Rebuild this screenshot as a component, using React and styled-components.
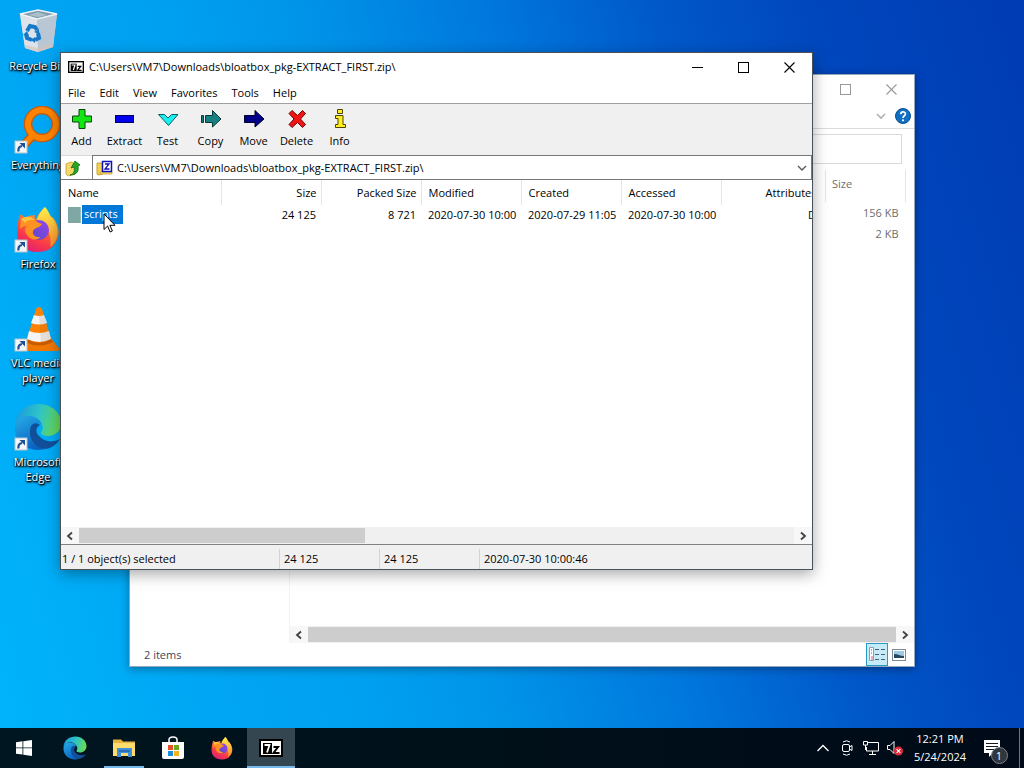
import React from 'react';
import styled, { createGlobalStyle, css } from 'styled-components';

const GlobalStyle = createGlobalStyle`
  *, *::before, *::after { box-sizing: border-box; }
  body { margin: 0; }
  button, input { font: inherit; color: inherit; border: 0; padding: 0; margin: 0; background: none; }
  svg { display: block; flex: none; }
`;

const font = css`
  font-family: 'Open Sans', 'Noto Sans', sans-serif;
  font-size: 11px;
  line-height: 16px;
`;

const Screen = styled.div`
  ${font}
  display: flex;
  flex-direction: column;
  height: 100vh;
  overflow: hidden;
  color: #000;
`;

const Desktop = styled.main`
  position: relative;
  flex: 1;
  min-height: 0;
  background: linear-gradient(74deg, #00b4fb 0%, #00a4f2 20%, #00a0f0 30%, #0094e9 41%, #0076dc 57%, #0058c9 70%, #0046bc 83%, #003cb4 100%);
`;

/* ---------- desktop shortcuts ---------- */

const ShortcutList = styled.nav`
  display: flex;
  flex-direction: column;
  width: 76px;
`;

const Shortcut = styled.a`
  display: flex;
  flex-direction: column;
  align-items: center;
  gap: 3px;
  height: 99px;
  padding-top: 7px;
  color: #fff;
  text-align: center;
  text-decoration: none;
  line-height: 15px;
  text-shadow: 0 1px 2px #000, 1px 1px 1px #000, 1px 1px 3px #000;
`;

/* ---------- windows ---------- */

const Window = styled.section`
  position: absolute;
  display: flex;
  flex-direction: column;
  background: #fff;
`;

const ArchiveWindow = styled(Window)`
  top: 52px;
  left: 60px;
  right: 211px;
  bottom: 158px;
  border: 1px solid #4a5258;
  box-shadow: 0 4px 14px rgba(0, 0, 0, 0.35);
`;

const ExplorerWindow = styled(Window)`
  top: 74px;
  left: 129px;
  right: 109px;
  bottom: 61px;
  border: 1px solid rgba(20, 60, 110, 0.45);
  box-shadow: 0 2px 8px rgba(0, 0, 0, 0.35);
  color: #6d6d6d;
`;

const TitleBar = styled.header`
  display: flex;
  align-items: center;
  height: 30px;
  padding: 0 0 2px 7px;
  gap: 5px;
  flex: none;
`;

const Title = styled.h1`
  flex: 1;
  margin: 0;
  font-size: 11px;
  font-weight: 400;
`;

const CaptionButton = styled.button`
  display: flex;
  align-items: center;
  justify-content: center;
  width: 46px;
  height: 28px;
  margin-left: ${(p) => (p.$first ? 'auto' : '-5px')};
`;

const MenuBar = styled.nav`
  display: flex;
  height: 21px;
  border-bottom: 1px solid #a0a0a0;
  flex: none;
`;

const MenuItem = styled.button`
  padding: 0 7px 1px;
`;

const Toolbar = styled.div`
  display: flex;
  gap: 2px;
  height: 51px;
  padding-top: 5px;
  background: #f0f0f0;
  flex: none;
`;

const ToolButton = styled.button`
  display: flex;
  flex-direction: column;
  align-items: center;
  gap: 4px;
  width: 41px;
`;

const AddressBar = styled.div`
  display: flex;
  height: 25px;
  flex: none;
`;

const UpButton = styled.button`
  width: 31px;
  padding-left: 4px;
  border-top: 1px solid #d8d8d8;
  border-bottom: 1px solid #777;
`;

const PathBox = styled.div`
  display: flex;
  flex: 1;
  align-items: center;
  gap: 4px;
  padding: 0 4px 0 3px;
  border: 1px solid #777;
`;

const PathInput = styled.input`
  flex: 1;
  min-width: 0;
`;

const ListArea = styled.div`
  flex: 1;
  min-height: 0;
  overflow: hidden;
`;

const FileTable = styled.table`
  width: 760px;
  table-layout: fixed;
  border-collapse: collapse;
`;

const HeadCell = styled.th`
  height: 25px;
  padding: 0 4px 0 7px;
  border-right: 1px solid #e5e5e5;
  font-weight: 400;
  text-align: ${(p) => p.$align || 'left'};
  white-space: nowrap;
`;

const Cell = styled.td`
  height: 19px;
  padding: 0 5px 0 7px;
  text-align: ${(p) => p.$align || 'left'};
  white-space: nowrap;
`;

const FileName = styled.div`
  display: flex;
  align-items: center;
  gap: 1px;
`;

const Folder = styled.span`
  width: 13px;
  height: 16px;
  background: #7fa8a5;
  border-right: 1px solid #99bdb8;
`;

const SelectedName = styled.span`
  padding: 1px 5px 2px 2px;
  background: #0078d7;
  color: #fff;
`;

const ScrollBar = styled.div`
  display: flex;
  align-items: center;
  height: 17px;
  background: #f0f0f0;
  flex: none;
`;

const ScrollButton = styled.button`
  display: flex;
  align-items: center;
  justify-content: center;
  width: 18px;
  height: 17px;
  background: #f7f7f7;
`;

const ScrollTrack = styled.div`
  flex: 1;
  height: 15px;
`;

const ScrollThumb = styled.div`
  width: ${(p) => p.$size};
  height: 100%;
  background: #cdcdcd;
`;

const StatusBar = styled.footer`
  display: flex;
  align-items: center;
  height: 25px;
  padding-top: 3px;
  border-top: 1px solid #808080;
  background: #f0f0f0;
  flex: none;
`;

const StatusCell = styled.span`
  width: ${(p) => p.$width};
  padding: 2px 0 2px ${(p) => (p.$first ? '1px' : '4px')};
  border-right: ${(p) => (p.$last ? '0' : '1px solid #d4d4d4')};
`;

/* ---------- explorer parts ---------- */

const RibbonBar = styled.div`
  display: flex;
  align-items: center;
  justify-content: flex-end;
  gap: 9px;
  height: 24px;
  padding: 0 3px 2px 0;
  border-bottom: 1px solid #dcdcdc;
  flex: none;
`;

const SearchRow = styled.div`
  display: flex;
  justify-content: flex-end;
  padding: 5px 12px 6px;
  flex: none;
`;

const SearchInput = styled.input`
  width: 190px;
  height: 30px;
  border: 1px solid #d9d9d9;
`;

const ExplorerBody = styled.div`
  display: flex;
  flex: 1;
  min-height: 0;
`;

const NavPane = styled.aside`
  width: 160px;
  border-right: 1px solid #f3f3f3;
`;

const ExplorerMain = styled.div`
  display: flex;
  flex: 1;
  flex-direction: column;
`;

const ExplorerList = styled.div`
  flex: 1;
  padding-right: 8px;
`;

const ExplorerTable = styled.table`
  width: 100%;
  table-layout: fixed;
  border-collapse: collapse;
`;

const SizeHead = styled.th`
  width: 80px;
  height: 32px;
  padding: 0 6px 4px;
  border-left: 1px solid #e5e5e5;
  border-right: 1px solid #e5e5e5;
  font-weight: 400;
  text-align: left;
`;

const SizeCell = styled.td`
  height: 21px;
  padding: 0 7px 0 0;
  text-align: right;
`;

const ExplorerStatus = styled.footer`
  display: flex;
  align-items: center;
  height: 23px;
  padding: 0 4px 0 14px;
  color: #3b4658;
  flex: none;
`;

const ItemCount = styled.span`
  flex: 1;
`;

const ViewButton = styled.button`
  display: flex;
  align-items: center;
  justify-content: center;
  width: 22px;
  height: 23px;
  border: 1px solid ${(p) => (p.$active ? '#2a9ac4' : 'transparent')};
  background: ${(p) => (p.$active ? '#c4ebf7' : 'transparent')};
`;

/* ---------- taskbar ---------- */

const Taskbar = styled.footer`
  display: flex;
  height: 40px;
  background: linear-gradient(90deg, #001620 0%, #001019 50%, #000a18 100%);
  color: #fff;
  flex: none;
`;

const TaskButtons = styled.div`
  display: flex;
  flex: 1;
  gap: 1px;
`;

const TaskButton = styled.button`
  position: relative;
  display: flex;
  align-items: center;
  justify-content: center;
  width: ${(p) => (p.$start ? '50px' : '48px')};
  padding-right: ${(p) => (p.$start ? '2px' : '0')};
  background: ${(p) => (p.$active ? '#34464f' : 'transparent')};

  &::after {
    content: '';
    position: absolute;
    bottom: 0;
    left: ${(p) => (p.$active ? '0' : '4px')};
    right: ${(p) => (p.$active ? '0' : '4px')};
    height: 2px;
    background: ${(p) => (p.$active || p.$open ? '#76b9ed' : 'transparent')};
  }
`;

const Tray = styled.div`
  display: flex;
  align-items: center;
`;

const TrayButton = styled.button`
  display: flex;
  align-items: center;
  justify-content: center;
  width: 24px;
  height: 40px;
`;

const Clock = styled.button`
  display: flex;
  flex-direction: column;
  align-items: center;
  width: 66px;
  line-height: 18px;
`;

const NoticeButton = styled(TrayButton)`
  width: 46px;
  padding-right: 8px;
`;

const ShowDesktop = styled.button`
  width: 5px;
  height: 40px;
  border-left: 1px solid #6b757c;
`;

const Pointer = styled.svg`
  position: absolute;
  left: 103px;
  top: 213px;
`;

/* ---------- drawings ---------- */

const LinkBadge = () => (
  <g>
    <rect x="1" y="35" width="12" height="12" fill="#f4f6f8" stroke="#b9c3cc" strokeWidth="1" />
    <path d="M4.500 45.500C4 42 5 40.500 8 40" fill="none" stroke="#1c5096" strokeWidth="2.200" />
    <path d="M5.500 37H11v5.500z" fill="#1c5096" />
  </g>
);

const RecycleBin = () => (
  <svg width="48" height="48" viewBox="0 0 48 48">
    <path d="M6 7 24 3l19 4-4 33-15 5-13-4z" fill="#ccd6df" />
    <path d="M6 7l17 5 1 33-13-4z" fill="#dde3e9" />
    <path d="M23 12 43 7l-4 33-15 5z" fill="#b9c6d3" />
    <path d="M6 7 24 3l19 4-20 5z" fill="#7d9aad" stroke="#edf3f6" strokeWidth="1.500" />
    <path d="M14 8l10-3 9 3-9 2z" fill="#a9bfc9" />
    <g fill="none" stroke="#1678c8" strokeWidth="4">
      <path d="M13 24l3-5 5 1 2 3" />
      <path d="M24 26l1 5-4 2" />
      <path d="M18 33l-5-2-1-4" />
    </g>
    <path d="M20 25l5-3 0 5zM21 30v6l-4-3zM9 28l4-4 2 5z" fill="#1678c8" />
    <path d="M11 41l13 4 15-5 0-3-15 4-13-3z" fill="#d9c3b8" opacity=".6" />
  </svg>
);

const EverythingIcon = () => (
  <svg width="48" height="48" viewBox="0 0 48 48">
    <path d="M20 28 8 41" stroke="#c85a0a" strokeWidth="9" />
    <circle cx="28" cy="18" r="14" fill="none" stroke="#c85a0a" strokeWidth="8.500" />
    <path d="M20 28 8 41" stroke="#ff8300" strokeWidth="6" />
    <circle cx="28" cy="18" r="14" fill="none" stroke="#ff8300" strokeWidth="6" />
    <LinkBadge />
  </svg>
);

const FirefoxArt = () => (
  <g>
    <path d="M6 10c2-1 3 1 5 3 4-3 7-2 10-3-1 2 0 4 1 5 2-7 7-10 8-13 4 3 4 7 7 10 2 0 3 2 3 2 5 7 6 15 3 21-4 9-11 12-20 12C11 47 3 39 3 28c0-7 1-12 3-18z" fill="url(#ffBody)" />
    <path d="M23 15c2-7 6-10 8-13 4 4 4 8 8 12 7 9 6 23-3 28 2-8-1-18-6-23z" fill="url(#ffTail)" />
    <circle cx="25" cy="25" r="10" fill="url(#ffGlobe)" />
    <path d="M7 14c5-3 11-2 15 2 2 2 5 2 6 3-2 4-7 3-9 7-1 4 3 7 8 6-4 4-11 3-14-2-3-4-2-7 0-9-3 0-5 1-7 3z" fill="#ff9322" />
    <path d="M7 14c3-3 10-3 14 1-5-1-9 1-10 3z" fill="#ffc343" />
  </g>
);

const Firefox = ({ size, linked }) => (
  <svg width={size} height={size} viewBox="0 0 48 48">
    <defs>
      <linearGradient id="ffBody" x1=".8" y1="0" x2=".3" y2="1">
        <stop offset="0" stopColor="#ffd43a" />
        <stop offset=".4" stopColor="#ff7a2c" />
        <stop offset=".75" stopColor="#f8364c" />
        <stop offset="1" stopColor="#dc2275" />
      </linearGradient>
      <linearGradient id="ffTail" x1="0" y1="0" x2="0" y2="1">
        <stop offset="0" stopColor="#fff04a" />
        <stop offset="1" stopColor="#ff8a2a" />
      </linearGradient>
      <linearGradient id="ffGlobe" x1="1" y1="0" x2="0" y2="1">
        <stop offset="0" stopColor="#9a46ee" />
        <stop offset="1" stopColor="#5348c8" />
      </linearGradient>
    </defs>
    <FirefoxArt />
    {linked && <LinkBadge />}
  </svg>
);

const VlcIcon = () => (
  <svg width="48" height="48" viewBox="0 0 48 48">
    <path d="M14 33h22l9 11q1 3-2 3H5q-2 0-1-3z" fill="#f07800" />
    <path d="M14 33h22l3 5q-14 7-28 0z" fill="#c65b00" />
    <path d="M22 5q3-4 6 0l9 30q-12 7-24 0z" fill="#ff8205" />
    <path d="M20 11q5 2 10 0l3 8q-8 3-16 0zM15 27q10 4 20 0l2 8q-12 6-24 0z" fill="#f4f4f4" />
    <path d="M25 12l5-1 7 24q-5 3-10 3z" fill="#8a5a30" opacity=".14" />
    <LinkBadge />
  </svg>
);

const Edge = ({ size, linked }) => (
  <svg width={size} height={size} viewBox="0 0 48 48">
    <defs>
      <linearGradient id="edgeTop" x1="0" y1=".4" x2="1" y2=".6">
        <stop offset="0" stopColor="#1a9ce0" />
        <stop offset=".5" stopColor="#2fc5c4" />
        <stop offset="1" stopColor="#6bdc4e" />
      </linearGradient>
      <linearGradient id="edgeLeft" x1="0" y1="0" x2=".5" y2="1">
        <stop offset="0" stopColor="#27aee9" />
        <stop offset="1" stopColor="#0a62c0" />
      </linearGradient>
    </defs>
    <path d="M1 22C2 8 12 1 25 1c13 0 22 9 22 19 0 8-6 13-13 13-5 0-8-2-7-4 3-3 2-9-3-13C17 10 6 12 1 22z" fill="url(#edgeTop)" />
    <path d="M1 24c1-8 8-12 14-11 6 0 11 4 12 8-6-3-10 2-10 8 0 8 6 15 14 17C15 50 0 40 1 24z" fill="url(#edgeLeft)" />
    <path d="M17 23c-4 11 4 23 15 23 6-1 11-5 14-10-7 4-16 3-21-3-4-4-3-9 1-11-3-3-7-2-9 1z" fill="#124f9b" />
    {linked && <LinkBadge />}
  </svg>
);

const SevenZipIcon = ({ width, height }) => (
  <svg width={width} height={height} viewBox="0 0 24 18">
    <rect x="1" y="1" width="22" height="16" fill="#fff" stroke="#000" strokeWidth="2" />
    <rect x="4" y="4" width="9" height="11" fill="#000" />
    <path d="M5.500 6h5L8 13.500" fill="none" stroke="#fff" strokeWidth="1.800" />
    <path d="M14.500 8h4.500l-4.500 6h6" fill="none" stroke="#000" strokeWidth="2" />
  </svg>
);

const toolIcons = {
  Add: <path d="M7 .5h6v6.500h6.500v6H13v6.500H7V13H.5V7H7z" fill="#12e512" stroke="#064806" />,
  Extract: <rect x=".5" y="6.500" width="18" height="7" fill="#0000f2" stroke="#000060" />,
  Test: <path d="M.5 5.500h6L10 9l3.500-3.500h6.500L10.500 16.500z" fill="#18f0f0" stroke="#0a5c66" />,
  Copy: <path d="M.5 6.500h2v7h-2zM4.500 6.500h7v-5L20 10l-8.500 8v-4.500h-7z" fill="#178080" stroke="#073838" />,
  Move: <path d="M.5 6.500H11v-5L20 10l-9 8v-4.500H.5z" fill="#000088" stroke="#00002e" />,
  Delete: <path d="M2 4.500 5 1.500l5.500 5 5-5 3 3-5 5.500 5 5.500-3 3-5-5-5.500 5-3-3 5-5.500z" fill="#f01414" stroke="#6a0808" />,
  Info: <path d="M7.500.5h5v4h-5zM5.500 6.500h7.500v9h2.500v3h-10v-3H8v-6H5.500z" fill="#ffef20" stroke="#4a4400" />,
};

const UpFolder = () => (
  <svg width="17" height="18" viewBox="0 0 17 18">
    <path d="M1 5l5-2 4 2v10l-7 2-2-2z" fill="#f6d768" stroke="#d9a93a" />
    <path d="M5 16c4-1 5-4 4-8L6 9l4-7 5 4-2 1c1 5-1 9-8 9z" fill="#28a428" stroke="#0c700c" strokeWidth=".8" />
  </svg>
);

const ArchiveIcon = () => (
  <svg width="17" height="16" viewBox="0 0 17 16">
    <path d="M1 3h4l2 1v10l-5 1-1-1z" fill="#f2d254" stroke="#c99f2c" />
    <path d="M4 12h12v2H4z" fill="#f8e27c" stroke="#c99f2c" strokeWidth=".8" />
    <rect x="6.500" y="1.500" width="9" height="10" fill="#fff" stroke="#1010b8" strokeWidth="1.500" />
    <path d="M9 4h4L9 9h4.500" fill="none" stroke="#1010b8" strokeWidth="1.300" />
  </svg>
);

const Chevron = ({ color = '#555', d = 'M1 3l4 4 4-4', stroke = 1.3 }) => (
  <svg width="10" height="10" viewBox="0 0 10 10">
    <path d={d} fill="none" stroke={color} strokeWidth={stroke} />
  </svg>
);

const Minimise = () => (
  <svg width="11" height="11"><path d="M0 5.500h11" stroke="#000" /></svg>
);
const Maximise = ({ color }) => (
  <svg width="11" height="11"><rect x=".5" y=".5" width="10" height="10" fill="none" stroke={color} /></svg>
);
const Close = ({ color }) => (
  <svg width="11" height="11"><path d="M.5.5l10 10M10.500.5l-10 10" stroke={color} strokeWidth="1.100" /></svg>
);

const Help = () => (
  <svg width="16" height="16" viewBox="0 0 16 16">
    <circle cx="8" cy="8" r="7.500" fill="#0f6fc0" stroke="#0a4f94" />
    <path d="M5.800 6.200c0-3 4.600-3 4.600-.2C10.400 7.800 8 7.800 8 10" fill="none" stroke="#fff" strokeWidth="1.700" />
    <circle cx="8" cy="12.300" r="1.100" fill="#fff" />
  </svg>
);

const DetailsIcon = () => (
  <svg width="17" height="15" viewBox="0 0 17 15">
    <path d="M.5.5h4v13h-4z" fill="#fff" stroke="#8aa0ae" />
    <path d="M2 3h1M2 6h1" stroke="#4a6078" />
    <path d="M2 10h2M2 12h2" stroke="#e0557a" />
    <path d="M6 2.500h4M12 2.500h4M6 7.500h4M12 7.500h4M6 12.500h4M12 12.500h4" stroke="#4a6078" />
  </svg>
);

const ThumbsIcon = () => (
  <svg width="14" height="12" viewBox="0 0 14 12">
    <rect x=".5" y=".5" width="13" height="11" fill="#fff" stroke="#7c8a96" />
    <rect x="2" y="2" width="10" height="7" fill="#9ccbe8" />
    <path d="M2 5c4 0 6 2 10 2v2H2z" fill="#254a5e" />
  </svg>
);

const WindowsLogo = () => (
  <svg width="16" height="16" viewBox="0 0 16 16">
    <path d="M0 2.200 6.500 1.300v6.200H0zM7.300 1.200 16 0v7.500H7.300zM0 8.300h6.500v6.300L0 13.700zM7.300 8.300H16V16l-8.700-1.200z" fill="#fff" />
  </svg>
);

const ExplorerIcon = () => (
  <svg width="23" height="20" viewBox="0 0 23 20">
    <path d="M0 1.500h8l2 2h12V18H0z" fill="#e9b23c" />
    <path d="M0 5h22v13H0z" fill="#ffdc6e" />
    <path d="M4 10h15v9h-4v-4H8v4H4z" fill="#3f8fdb" />
    <path d="M6 12h11v2H6z" fill="#2a6fb8" />
  </svg>
);

const StoreIcon = () => (
  <svg width="24" height="24" viewBox="0 0 24 24">
    <path d="M8 6V4q0-3 4-3t4 3v2" fill="none" stroke="#fff" strokeWidth="1.500" />
    <path d="M1 6h22v15q0 2-2 2H3q-2 0-2-2z" fill="#fff" />
    <path d="M7 9h5v5H7z" fill="#e5502c" />
    <path d="M13 9h5v5h-5z" fill="#6cab1c" />
    <path d="M7 15h5v5H7z" fill="#1b8fd6" />
    <path d="M13 15h5v5h-5z" fill="#f5b21c" />
  </svg>
);

const CameraIcon = () => (
  <svg width="14" height="18" viewBox="0 0 14 18" fill="none" stroke="#fff">
    <rect x="2.500" y="5.500" width="7" height="7" rx="1.500" />
    <path d="M9.500 8l2.500-1.500v5L9.500 10M3 3q3.500-2.500 7 0M3 15q3.500 2.500 7 0" />
  </svg>
);

const NetworkIcon = () => (
  <svg width="18" height="16" viewBox="0 0 18 16" fill="none" stroke="#fff">
    <path d="M6 2.500h10.500v8.500H4.500V7M10.500 11v3M7 14.500h7" />
    <path d="M1.500 1.500h4v3.500h-4zM3.500 5v5" />
  </svg>
);

const MutedIcon = () => (
  <svg width="18" height="18" viewBox="0 0 18 18">
    <path d="M1.500 6.500h2.500l4-4v12l-4-4H1.500z" fill="none" stroke="#fff" />
    <circle cx="12.500" cy="12" r="4.500" fill="#dc2838" />
    <path d="M10.700 10.200l3.600 3.600M14.300 10.200l-3.600 3.600" stroke="#fff" strokeWidth="1.200" />
  </svg>
);

const BadgeButton = styled.span`
  position: relative;
  display: block;
`;

const BadgeCount = styled.span`
  position: absolute;
  left: 7px;
  top: 7px;
  width: 17px;
  height: 17px;
  border: 1px solid #7a8086;
  border-radius: 50%;
  background: #30363d;
  line-height: 15px;
  text-align: center;
`;

const NoticeIcon = () => (
  <svg width="17" height="17" viewBox="0 0 17 17">
    <path d="M0 0h16v13H9l-4 4v-4H0z" fill="#fff" />
    <path d="M2 3.500h12M2 6.500h12M2 9.500h8" stroke="#101820" />
  </svg>
);

/* ---------- data ---------- */

const shortcuts = [
  { label: 'Recycle Bin', icon: <RecycleBin /> },
  { label: 'Everything', icon: <EverythingIcon /> },
  { label: 'Firefox', icon: <Firefox size={48} linked /> },
  { label: 'VLC media player', icon: <VlcIcon /> },
  { label: 'Microsoft Edge', icon: <Edge size={48} linked /> },
];

const columns = [
  { name: 'Name', width: 160 },
  { name: 'Size', width: 100, align: 'right' },
  { name: 'Packed Size', width: 100, align: 'right' },
  { name: 'Modified', width: 100 },
  { name: 'Created', width: 100 },
  { name: 'Accessed', width: 100 },
  { name: 'Attributes', width: 100, align: 'right' },
];

const path = 'C:\\Users\\VM7\\Downloads\\bloatbox_pkg-EXTRACT_FIRST.zip\\';

const LeftArrow = () => <Chevron d="M7 1.500 3 5l4 3.500" stroke={1.8} color="#404040" />;
const RightArrow = () => <Chevron d="M3 1.500 7 5 3 8.500" stroke={1.8} color="#404040" />;

function HorizontalScroll({ size }) {
  return (
    <ScrollBar>
      <ScrollButton aria-label="Scroll left"><LeftArrow /></ScrollButton>
      <ScrollTrack><ScrollThumb $size={size} /></ScrollTrack>
      <ScrollButton aria-label="Scroll right"><RightArrow /></ScrollButton>
    </ScrollBar>
  );
}

function Explorer() {
  return (
    <ExplorerWindow>
      <TitleBar>
        <CaptionButton $first aria-label="Maximize"><Maximise color="#999" /></CaptionButton>
        <CaptionButton aria-label="Close"><Close color="#999" /></CaptionButton>
      </TitleBar>
      <RibbonBar>
        <button aria-label="Expand ribbon"><Chevron color="#b0b0b0" stroke={1.6} /></button>
        <button aria-label="Help"><Help /></button>
      </RibbonBar>
      <SearchRow><SearchInput aria-label="Search" /></SearchRow>
      <ExplorerBody>
        <NavPane />
        <ExplorerMain>
          <ExplorerList>
            <ExplorerTable>
              <thead>
                <tr><td /><SizeHead scope="col">Size</SizeHead></tr>
              </thead>
              <tbody>
                <tr><td /><SizeCell>156 KB</SizeCell></tr>
                <tr><td /><SizeCell>2 KB</SizeCell></tr>
              </tbody>
            </ExplorerTable>
          </ExplorerList>
          <HorizontalScroll size="100%" />
        </ExplorerMain>
      </ExplorerBody>
      <ExplorerStatus>
        <ItemCount>2 items</ItemCount>
        <ViewButton $active aria-label="Details view"><DetailsIcon /></ViewButton>
        <ViewButton aria-label="Large thumbnails"><ThumbsIcon /></ViewButton>
      </ExplorerStatus>
    </ExplorerWindow>
  );
}

function SevenZip() {
  return (
    <ArchiveWindow>
      <TitleBar>
        <SevenZipIcon width={16} height={12} />
        <Title>{path}</Title>
        <CaptionButton aria-label="Minimize"><Minimise /></CaptionButton>
        <CaptionButton aria-label="Maximize"><Maximise color="#000" /></CaptionButton>
        <CaptionButton aria-label="Close"><Close color="#000" /></CaptionButton>
      </TitleBar>
      <MenuBar>
        {['File', 'Edit', 'View', 'Favorites', 'Tools', 'Help'].map((m) => (
          <MenuItem key={m}>{m}</MenuItem>
        ))}
      </MenuBar>
      <Toolbar>
        {Object.entries(toolIcons).map(([name, art]) => (
          <ToolButton key={name}>
            <svg width="20" height="20" viewBox="0 0 20 20">{art}</svg>
            {name}
          </ToolButton>
        ))}
      </Toolbar>
      <AddressBar>
        <UpButton aria-label="Up one level"><UpFolder /></UpButton>
        <PathBox>
          <ArchiveIcon />
          <PathInput aria-label="Path" defaultValue={path} />
          <button aria-label="Show history"><Chevron /></button>
        </PathBox>
      </AddressBar>
      <ListArea>
        <FileTable>
          <colgroup>
            {columns.map((c) => <col key={c.name} width={c.width} />)}
          </colgroup>
          <thead>
            <tr>
              {columns.map((c) => (
                <HeadCell key={c.name} scope="col" $align={c.align}>{c.name}</HeadCell>
              ))}
            </tr>
          </thead>
          <tbody>
            <tr>
              <Cell><FileName><Folder /><SelectedName>scripts</SelectedName></FileName></Cell>
              <Cell $align="right">24 125</Cell>
              <Cell $align="right">8 721</Cell>
              <Cell>2020-07-30 10:00</Cell>
              <Cell>2020-07-29 11:05</Cell>
              <Cell>2020-07-30 10:00</Cell>
              <Cell $align="right">D</Cell>
            </tr>
          </tbody>
        </FileTable>
      </ListArea>
      <HorizontalScroll size="40%" />
      <StatusBar>
        <StatusCell $first $width="219px">1 / 1 object(s) selected</StatusCell>
        <StatusCell $width="100px">24 125</StatusCell>
        <StatusCell $width="100px">24 125</StatusCell>
        <StatusCell $last $width="auto">2020-07-30 10:00:46</StatusCell>
      </StatusBar>
    </ArchiveWindow>
  );
}

export default function App() {
  return (
    <Screen>
      <GlobalStyle />
      <Desktop>
        <ShortcutList aria-label="Desktop">
          {shortcuts.map((s) => (
            <Shortcut key={s.label} href="#">{s.icon}{s.label}</Shortcut>
          ))}
        </ShortcutList>
        <Explorer />
        <SevenZip />
        <Pointer width="13" height="20" viewBox="0 0 13 20">
          <path d="M1 1v15.500l3.600-3.500 2.500 6 2.300-1-2.500-5.700H12z" fill="#fff" stroke="#000" />
        </Pointer>
      </Desktop>
      <Taskbar>
        <TaskButtons>
          <TaskButton $start aria-label="Start"><WindowsLogo /></TaskButton>
          <TaskButton aria-label="Microsoft Edge"><Edge size={24} /></TaskButton>
          <TaskButton $open aria-label="File Explorer"><ExplorerIcon /></TaskButton>
          <TaskButton aria-label="Microsoft Store"><StoreIcon /></TaskButton>
          <TaskButton aria-label="Firefox"><Firefox size={24} /></TaskButton>
          <TaskButton $active aria-label="7-Zip"><SevenZipIcon width={24} height={18} /></TaskButton>
        </TaskButtons>
        <Tray>
          <TrayButton aria-label="Show hidden icons">
            <svg width="12" height="8" viewBox="0 0 12 8"><path d="M.5 7 6 1.500 11.500 7" fill="none" stroke="#fff" strokeWidth="1.300" /></svg>
          </TrayButton>
          <TrayButton aria-label="Meet Now"><CameraIcon /></TrayButton>
          <TrayButton aria-label="Network"><NetworkIcon /></TrayButton>
          <TrayButton aria-label="Volume muted"><MutedIcon /></TrayButton>
          <Clock><span>12:21 PM</span><span>5/24/2024</span></Clock>
          <NoticeButton aria-label="Notifications">
            <BadgeButton><NoticeIcon /><BadgeCount>1</BadgeCount></BadgeButton>
          </NoticeButton>
          <ShowDesktop aria-label="Show desktop" />
        </Tray>
      </Taskbar>
    </Screen>
  );
}
